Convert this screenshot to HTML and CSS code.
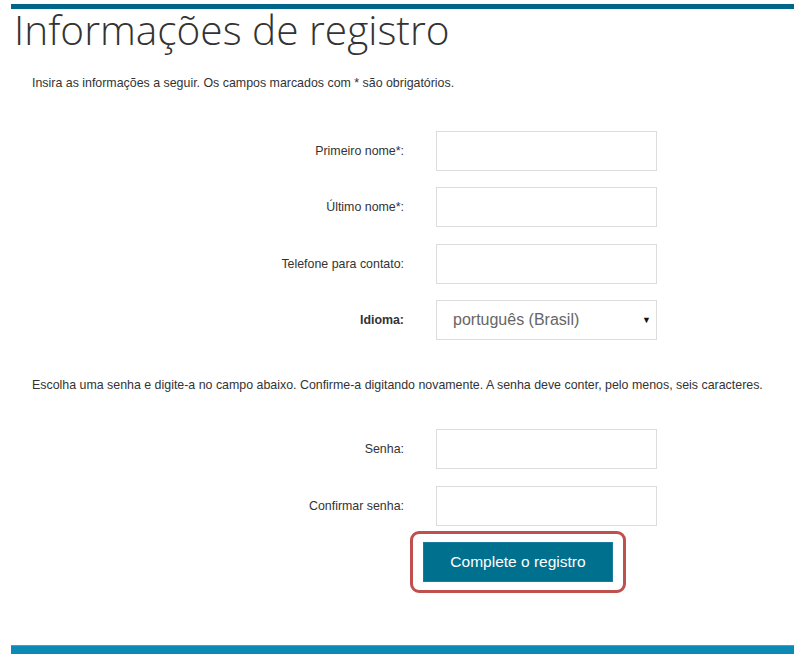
FILE: index.html
```html
<!DOCTYPE html>
<html lang="pt-BR">
<head>
<meta charset="utf-8">
<title>Informações de registro</title>
<link rel="stylesheet" href="styles.css">
</head>
<body>
<div class="page">
  <div class="top-bar"></div>
  <h1 class="title">Informações de registro</h1>
  <p class="intro">Insira as informações a seguir. Os campos marcados com * são obrigatórios.</p>
  <form class="form">
    <div class="group">
      <div class="row"><label class="label">Primeiro nome*:</label><input class="field" type="text"></div>
      <div class="row"><label class="label">Último nome*:</label><input class="field" type="text"></div>
      <div class="row"><label class="label">Telefone para contato:</label><input class="field" type="text"></div>
      <div class="row"><label class="label bold">Idioma:</label>
        <div class="field select"><span class="select-text">português (Brasil)</span><span class="arrow">▼</span></div>
      </div>
    </div>
    <p class="intro pw-intro">Escolha uma senha e digite-a no campo abaixo. Confirme-a digitando novamente. A senha deve conter, pelo menos, seis caracteres.</p>
    <div class="group">
      <div class="row"><label class="label">Senha:</label><input class="field" type="password"></div>
      <div class="row"><label class="label">Confirmar senha:</label><input class="field" type="password"></div>
    </div>
    <div class="actions">
      <div class="highlight"><button class="submit" type="button">Complete o registro</button></div>
    </div>
  </form>
  <div class="bottom-bar"></div>
</div>
</body>
</html>
```
FILE: styles.css
```css
html, body {
  margin: 0;
  padding: 0;
  background: #fff;
}
.page {
  margin: 0 11px;
  width: 783px;
  font-family: "Liberation Sans", Arial, sans-serif;
  color: #333;
}
.top-bar {
  margin-top: 4px;
  height: 5px;
  background: #00668a;
}
.title {
  margin: 0 0 0 3px;
  font-family: "Open Sans", sans-serif;
  font-weight: 300;
  font-size: 40.6px;
  line-height: 42px;
  color: #333;
  letter-spacing: 0;
}
.intro {
  margin: 24px 0 0 21px;
  font-size: 12.4px;
  line-height: 16px;
}
.form {
  margin: 0;
}
.group {
  display: flex;
  flex-direction: column;
  gap: 16.4px;
  margin-top: 40px;
}
.row {
  display: flex;
  align-items: center;
  gap: 32px;
}
.label {
  width: 393px;
  text-align: right;
  font-size: 12.4px;
}
.bold {
  font-weight: bold;
}
.field {
  box-sizing: border-box;
  width: 221px;
  height: 40px;
  margin: 0;
  border: 1px solid #dcdcdc;
  background: #fff;
  padding: 0 16px;
  font-family: inherit;
}
.select {
  display: flex;
  align-items: center;
  justify-content: space-between;
  padding: 0 5px 0 16px;
}
.select-text {
  font-size: 16px;
  color: #666;
}
.arrow {
  font-size: 9px;
  color: #111;
}
.pw-intro {
  margin-top: 37px;
}
.pw-intro + .group {
  margin-top: 36px;
}
.actions {
  display: flex;
  padding-left: 399px;
  margin-top: 5px;
}
.highlight {
  border: 3px solid #c0504d;
  border-radius: 9px;
  padding: 8px 10px;
}
.submit {
  display: block;
  width: 190px;
  height: 40px;
  border: 1px solid #1a7c9c;
  background: #00708f;
  color: #fff;
  font-family: "Liberation Sans", Arial, sans-serif;
  font-size: 15.5px;
  padding: 0;
}
.bottom-bar {
  margin-top: 52px;
  height: 9px;
  background: #0a8ab5;
  border-top: 1px solid #3aa6cb;
}
```
